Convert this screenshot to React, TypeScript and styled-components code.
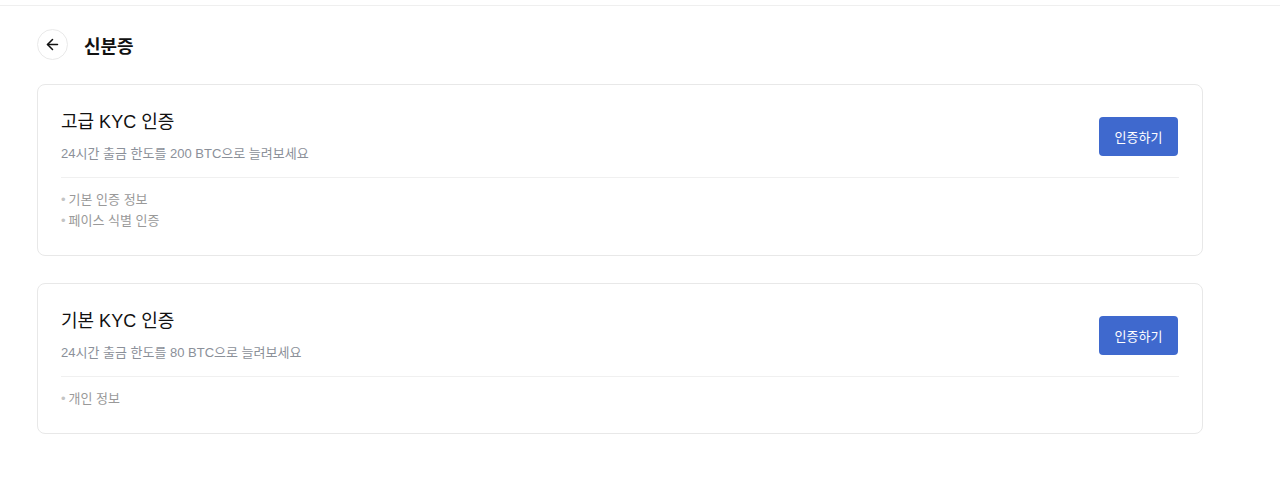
import React from 'react'
import styled, { createGlobalStyle } from 'styled-components'
import { ArrowLeft } from 'lucide-react'

type Level = {
  id: string
  title: string
  limit: string
  items: string[]
}

const levels: Level[] = [
  {
    id: 'advanced',
    title: '고급 KYC 인증',
    limit: '24시간 출금 한도를 200 BTC으로 늘려보세요',
    items: ['기본 인증 정보', '페이스 식별 인증']
  },
  {
    id: 'basic',
    title: '기본 KYC 인증',
    limit: '24시간 출금 한도를 80 BTC으로 늘려보세요',
    items: ['개인 정보']
  }
]

export default function App(): JSX.Element {
  return (
    <>
      <GlobalStyle />
      <TopBar />
      <Page>
        <Header>
          <BackButton type="button" aria-label="뒤로">
            <ArrowLeft size={17} strokeWidth={2.2} />
          </BackButton>
          <PageTitle>신분증</PageTitle>
        </Header>
        <CardList>
          {levels.map((level) => (
            <Card key={level.id}>
              <CardTop>
                <div>
                  <CardTitle>{level.title}</CardTitle>
                  <CardSub>{level.limit}</CardSub>
                </div>
                <VerifyButton type="button">인증하기</VerifyButton>
              </CardTop>
              <Requirements>
                {level.items.map((item) => (
                  <Requirement key={item}>{item}</Requirement>
                ))}
              </Requirements>
            </Card>
          ))}
        </CardList>
      </Page>
    </>
  )
}

const GlobalStyle = createGlobalStyle`
  html, body {
    margin: 0;
    background: #fff;
    font-family: "Liberation Sans", "Noto Sans CJK KR", sans-serif;
    color: #111;
  }
`

const TopBar = styled.div`
  height: 5px;
  border-bottom: 1px solid #efefef;
`

const Page = styled.div`
  padding: 23px 37px 40px;
  max-width: 1166px;
`

const Header = styled.div`
  display: flex;
  align-items: center;
  gap: 16px;
`

const BackButton = styled.button`
  width: 31px;
  height: 31px;
  border-radius: 50%;
  border: 1.5px solid #e9e9e9;
  background: #fff;
  color: #111;
  display: flex;
  align-items: center;
  justify-content: center;
  padding: 0;
  cursor: pointer;
`

const PageTitle = styled.h1`
  margin: 0;
  font-size: 18px;
  font-weight: 600;
  color: #111;
`

const CardList = styled.div`
  display: flex;
  flex-direction: column;
  gap: 27px;
  margin-top: 24px;
`

const Card = styled.div`
  border: 1px solid #e8e8e8;
  border-radius: 8px;
  padding: 24px 23px 24px 23px;
`

const CardTop = styled.div`
  display: flex;
  justify-content: space-between;
  align-items: center;
  padding-bottom: 13px;
  border-bottom: 1px solid #f0f0f0;
`

const CardTitle = styled.h2`
  margin: 0;
  font-size: 18px;
  line-height: 26px;
  font-weight: 400;
  color: #111;
`

const CardSub = styled.p`
  margin: 9px 0 0;
  font-size: 13px;
  line-height: 20px;
  color: #8b9099;
`

const VerifyButton = styled.button`
  width: 79px;
  height: 39px;
  margin-right: 1px;
  border: none;
  border-radius: 4px;
  background: #3f69ce;
  color: #fff;
  font-family: inherit;
  font-size: 13px;
  cursor: pointer;
`

const Requirements = styled.ul`
  list-style: none;
  margin: 11px 0 0;
  padding: 0;
`

const Requirement = styled.li`
  font-size: 13px;
  line-height: 21px;
  color: #999;

  &::before {
    content: '•';
    color: #c4c4c4;
    margin-right: 3px;
  }
`
